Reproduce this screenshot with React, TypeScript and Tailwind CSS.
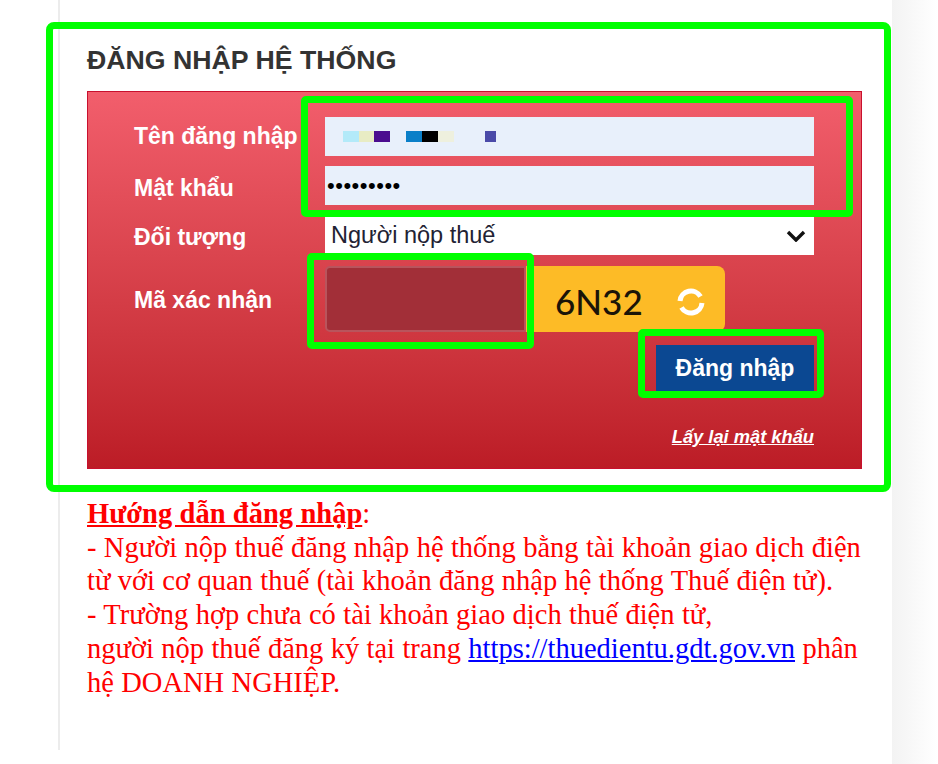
import { useState } from "react";

const SANS = "font-['Liberation_Sans',Arial,sans-serif]";
const SERIF = "font-['Liberation_Serif','Times_New_Roman',serif]";

// blurred-out characters of the user name in the screenshot
const maskedName = [
  { color: "bg-[#b3eaf9]", width: "w-4", gap: "ml-0" },
  { color: "bg-[#e8ecc4]", width: "w-[15px]", gap: "ml-0" },
  { color: "bg-[#4b0d8f]", width: "w-4", gap: "ml-0" },
  { color: "bg-[#0a7fc8]", width: "w-4", gap: "ml-4" },
  { color: "bg-[#000000]", width: "w-4", gap: "ml-0" },
  { color: "bg-[#eef0de]", width: "w-4", gap: "ml-0" },
  { color: "bg-[#4a4aa8]", width: "w-[11px]", gap: "ml-[31px]" },
];

function FieldLabel({ children }: { children: string }) {
  return <label className="text-[23px] leading-none font-bold text-white">{children}</label>;
}

export default function App() {
  const [captcha, setCaptcha] = useState("");

  return (
    <div className={`relative flex h-[764px] w-[938px] overflow-hidden bg-white ${SANS}`}>
      <div className="w-[58px] shrink-0" />
      <main className="h-[750px] w-[834px] shrink-0 border-l-2 border-[#ececec] pt-[45px] pr-[30px] pl-[27px]">
        <h1 className="text-[26.7px] leading-[30px] font-bold text-[#333333]">ĐĂNG NHẬP HỆ THỐNG</h1>

        <form className="mt-[16px] h-[378px] border border-[#c8102e] bg-gradient-to-b from-[#f25e6c] to-[#bc1c26] pt-[25px] pl-[46px]">
          <div className="grid grid-cols-[191px_489px] items-center">
            <FieldLabel>Tên đăng nhập</FieldLabel>
            <div className="flex h-[39px] items-center bg-[#e8f0fb] pl-[18px]">
              {maskedName.map((block, index) => (
                <span key={index} className={`h-[11px] ${block.width} ${block.gap} ${block.color}`} />
              ))}
            </div>

            <div className="mt-[10px] pt-[8px]">
              <FieldLabel>Mật khẩu</FieldLabel>
            </div>
            <input
              type="password"
              readOnly
              value="123456789"
              className="mt-[10px] h-[39px] bg-[#e8f0fb] pl-[2px] text-[22px] tracking-[0.5px] text-black outline-none"
            />

            <div className="mt-[12px] pt-[6px]">
              <FieldLabel>Đối tượng</FieldLabel>
            </div>
            <div className="relative mt-[12px] h-[38px]">
              <select className="h-full w-full appearance-none bg-white pl-[6px] text-[23.5px] text-[#222233] outline-none">
                <option>Người nộp thuế</option>
              </select>
              <svg
                viewBox="0 0 20 12"
                className="pointer-events-none absolute top-[13px] right-[8px] h-[12px] w-[20px]"
                fill="none"
                stroke="#111111"
                strokeWidth="3.4"
              >
                <path d="M2 2 L10 10 L18 2" />
              </svg>
            </div>

            <div className="mt-[11px] pt-[6px]">
              <FieldLabel>Mã xác nhận</FieldLabel>
            </div>
            <div className="mt-[11px] flex h-[66px]">
              <input
                value={captcha}
                onChange={(event) => setCaptcha(event.target.value)}
                className="h-full w-[201px] rounded-l-[5px] border-2 border-[#b9545c] bg-[#a22f38] outline-none"
              />
              <div className="flex h-full w-[199px] items-center rounded-r-[8px] bg-[#fdbb26] pt-[5px] pl-[29px]">
                <span className="font-['Lato',sans-serif] text-[35px] leading-none font-medium text-[#1a1408]">
                  6N32
                </span>
                <svg
                  viewBox="0 0 30 30"
                  className="ml-[33px] h-[30px] w-[30px]"
                  fill="none"
                  stroke="#ffffff"
                  strokeWidth="5"
                >
                  <path d="M4 14 A11 11 0 0 1 24.5 9.5" />
                  <path d="M26 16 A11 11 0 0 1 5.5 20.5" />
                </svg>
              </div>
            </div>
          </div>

          <div className="mt-[13px] flex w-[680px] justify-end">
            <button
              type="button"
              className="h-[47px] w-[158px] bg-[#0b4892] text-[23px] font-bold text-white"
            >
              Đăng nhập
            </button>
          </div>

          <div className="mt-[35px] flex w-[680px] justify-end">
            <a className="text-[18.3px] leading-[20px] font-bold text-white italic underline">Lấy lại mật khẩu</a>
          </div>
        </form>

        <div className={`mt-[28px] text-[28.5px] leading-[33.7px] [word-spacing:0.25px] text-[#ff0000] ${SERIF}`}>
          <p>
            <u className="font-bold">Hướng dẫn đăng nhập</u>:
          </p>
          <p>- Người nộp thuế đăng nhập hệ thống bằng tài khoản giao dịch điện</p>
          <p>từ với cơ quan thuế (tài khoản đăng nhập hệ thống Thuế điện tử).</p>
          <p>- Trường hợp chưa có tài khoản giao dịch thuế điện tử,</p>
          <p>
            người nộp thuế đăng ký tại trang{" "}
            <a className="text-[#0000ff] underline">https://thuedientu.gdt.gov.vn</a> phân
          </p>
          <p>hệ DOANH NGHIỆP.</p>
        </div>
      </main>
      <div className="flex-1 bg-gradient-to-r from-[#f3f3f3] to-white" />

      {/* green annotation boxes drawn on top of the screenshot */}
      <div className="absolute top-[22px] left-[46px] h-[470px] w-[845px] rounded-[8px] border-[7px] border-[#00ff00]" />
      <div className="absolute top-[96px] left-[301px] h-[121px] w-[552px] rounded-[5px] border-[7px] border-[#00ff00]" />
      <div className="absolute top-[253px] left-[307px] h-[96px] w-[227px] rounded-[5px] border-[7px] border-[#00ff00]" />
      <div className="absolute top-[329px] left-[638px] h-[69px] w-[186px] rounded-[5px] border-[7px] border-[#00ff00]" />
    </div>
  );
}
